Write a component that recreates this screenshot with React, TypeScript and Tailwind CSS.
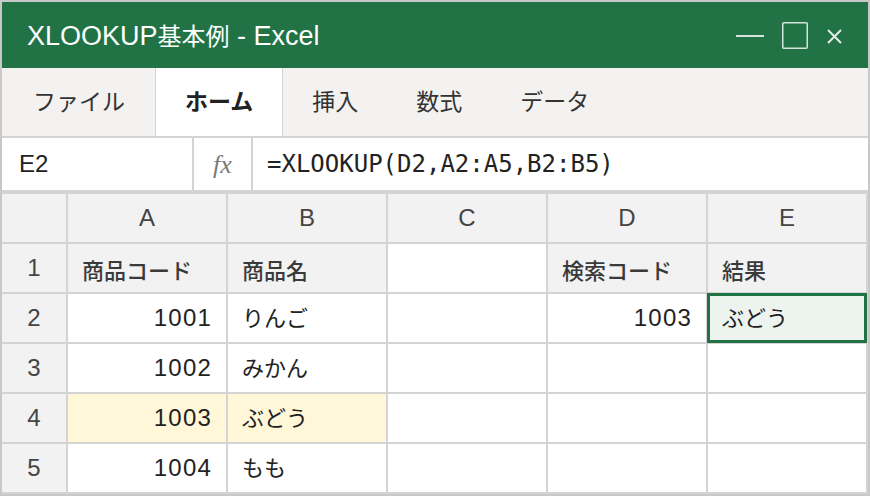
import React from "react";

const SANS = "font-['Liberation_Sans','Noto_Sans_CJK_JP',sans-serif]";

type Cell = { text?: string; kind?: "num" | "text" | "head"; bg?: string; selected?: boolean };

const rows: Cell[][] = [
  [
    { text: "商品コード", kind: "head", bg: "bg-[#f2f2f2]" },
    { text: "商品名", kind: "head", bg: "bg-[#f2f2f2]" },
    { bg: "bg-white" },
    { text: "検索コード", kind: "head", bg: "bg-[#f2f2f2]" },
    { text: "結果", kind: "head", bg: "bg-[#f2f2f2]" },
  ],
  [
    { text: "1001", kind: "num", bg: "bg-white" },
    { text: "りんご", kind: "text", bg: "bg-white" },
    { bg: "bg-white" },
    { text: "1003", kind: "num", bg: "bg-white" },
    { text: "ぶどう", kind: "text", bg: "bg-[#edf4ef]", selected: true },
  ],
  [
    { text: "1002", kind: "num", bg: "bg-white" },
    { text: "みかん", kind: "text", bg: "bg-white" },
    { bg: "bg-white" },
    { bg: "bg-white" },
    { bg: "bg-white" },
  ],
  [
    { text: "1003", kind: "num", bg: "bg-[#fff7d7]" },
    { text: "ぶどう", kind: "text", bg: "bg-[#fff7d7]" },
    { bg: "bg-white" },
    { bg: "bg-white" },
    { bg: "bg-white" },
  ],
  [
    { text: "1004", kind: "num", bg: "bg-white" },
    { text: "もも", kind: "text", bg: "bg-white" },
    { bg: "bg-white" },
    { bg: "bg-white" },
    { bg: "bg-white" },
  ],
];

function GridCell({ c, first }: { c: Cell; first: boolean }) {
  const base = `relative flex items-center px-[14px] ${c.bg ?? "bg-white"}`;
  if (c.kind === "num") {
    return (
      <div className={`${base} justify-end`}>
        <span className="text-[24px] tracking-[1.2px] text-[#222]">{c.text}</span>
      </div>
    );
  }
  return (
    <div className={`${base} justify-start ${first ? "pt-[6px]" : ""}`}>
      {c.text && (
        <span
          className={`text-[22px] ${c.kind === "head" ? "font-medium text-[#3a3a3a]" : "text-[#222]"}`}
        >
          {c.text}
        </span>
      )}
      {c.selected && (
        <div className="pointer-events-none absolute -left-[1px] -top-[1px] -right-[1px] -bottom-[1px] border-[3px] border-[#217346]" />
      )}
    </div>
  );
}

export default function App() {
  const tabs = ["ファイル", "ホーム", "挿入", "数式", "データ"];
  return (
    <div className={`w-[870px] h-[496px] border-2 border-[#c8c8c8] bg-white overflow-hidden flex flex-col ${SANS}`}>
      {/* Title bar */}
      <div className="h-[66px] shrink-0 bg-[#217346] flex items-center pl-[25px] pr-[26px]">
        <div className="text-white text-[27px] leading-none pt-[2px]">
          <span>XLOOKUP</span>
          <span className="text-[24px]">基本例</span>
          <span> - Excel</span>
        </div>
        <div className="ml-auto flex items-center">
          <svg width="28" height="4" viewBox="0 0 28 4" className="mt-[2px]">
            <line x1="0" y1="2" x2="28" y2="2" stroke="#d6e3da" strokeWidth="2" />
          </svg>
          <svg width="26" height="27" viewBox="0 0 26 27" className="ml-[18px]">
            <rect x="0.75" y="0.75" width="24.5" height="25.5" rx="1" fill="none" stroke="#d6e3da" strokeWidth="1.5" />
          </svg>
          <svg width="15" height="15" viewBox="0 0 15 15" className="ml-[19px] mt-[2px]">
            <path d="M1 1 L14 14 M14 1 L1 14" stroke="#e6eee8" strokeWidth="2" fill="none" />
          </svg>
        </div>
      </div>

      {/* Tabs */}
      <div className="h-[68px] shrink-0 bg-[#f3f2f1] flex">
        {tabs.map((t, i) =>
          i === 1 ? (
            <div
              key={t}
              className="flex items-center px-[29px] bg-white border-x border-[#d4d4d4] text-[23px] font-bold text-[#222]"
            >
              {t}
            </div>
          ) : (
            <div
              key={t}
              className={`flex items-center ${i === 0 ? "pl-[31px] pr-[30px]" : "px-[29px]"} text-[23px] text-[#333]`}
            >
              {t}
            </div>
          )
        )}
      </div>

      {/* Formula bar */}
      <div className="h-[56px] shrink-0 border-y-2 border-[#d4d4d4] bg-white flex">
        <div className="w-[192px] flex items-center pl-[17px] text-[24px] text-[#222] border-r-2 border-[#d4d4d4]">
          E2
        </div>
        <div className="w-[59px] flex items-center justify-center border-r-2 border-[#d4d4d4] font-['Liberation_Serif',serif] italic text-[26px] text-[#7a7a7a]">
          fx
        </div>
        <div className="flex items-center pl-[14px] font-['DejaVu_Sans_Mono',monospace] text-[24px] text-[#222]">
          =XLOOKUP(D2,A2:A5,B2:B5)
        </div>
      </div>

      {/* Grid */}
      <div className="grid grid-cols-[64px_repeat(5,158px)] auto-rows-[48px] gap-[2px] bg-[#d4d4d4] pt-[2px] pr-[2px] pb-[2px]">
        <div className="bg-[#f2f2f2]" />
        {["A", "B", "C", "D", "E"].map((l) => (
          <div key={l} className="bg-[#f2f2f2] flex items-center justify-center text-[24px] text-[#444]">
            {l}
          </div>
        ))}
        {rows.map((r, ri) => (
          <React.Fragment key={ri}>
            <div className="bg-[#f2f2f2] flex items-center justify-center text-[24px] text-[#444]">{ri + 1}</div>
            {r.map((c, ci) => (
              <GridCell key={ci} c={c} first={ri === 0} />
            ))}
          </React.Fragment>
        ))}
      </div>
    </div>
  );
}
